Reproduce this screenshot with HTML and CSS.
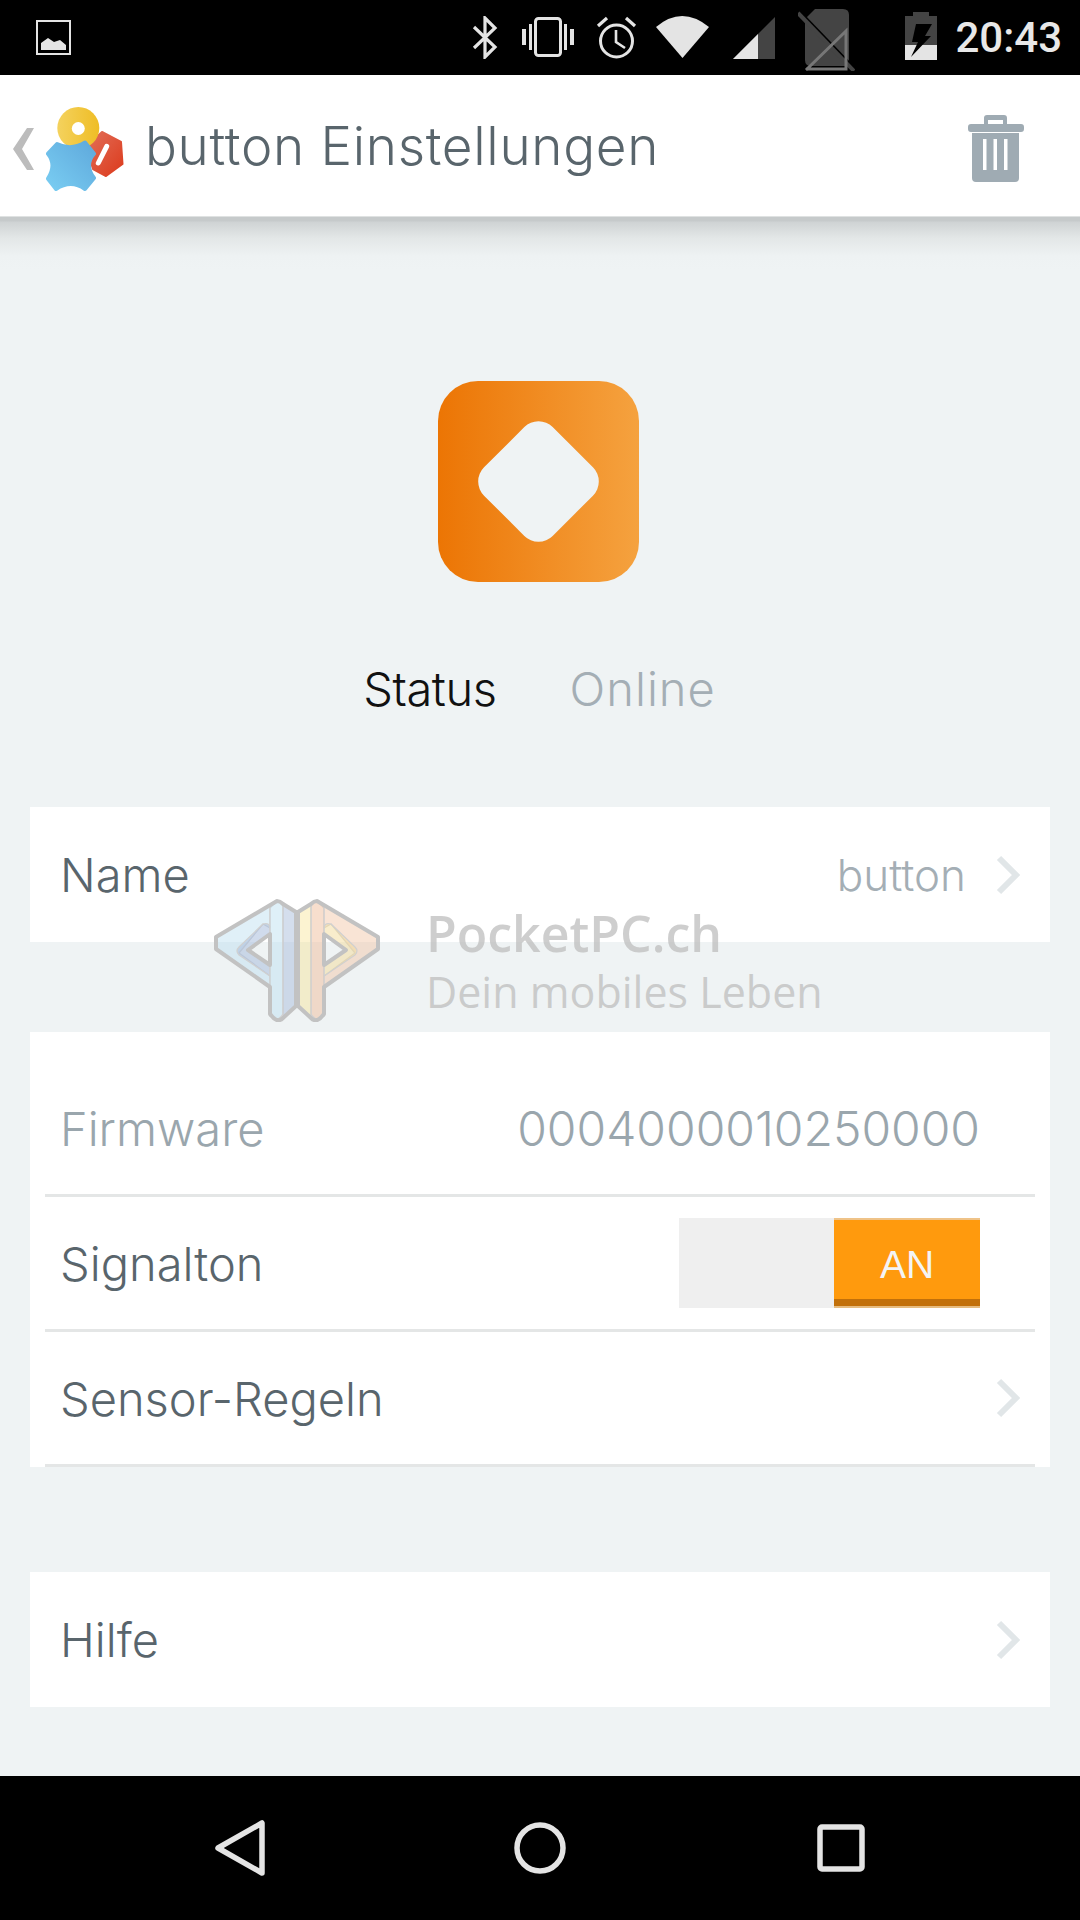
FILE: index.html
```html
<!DOCTYPE html>
<html>
<head>
    <meta charset="UTF-8">
    <title>button Einstellungen</title>
    <link rel="stylesheet" href="styles.css">
</head>
<body>
    <div class="phone">
        <div class="status-bar">
            <svg class="sb-image" viewBox="0 0 35 35">
                <rect x="1" y="1" width="33" height="33" fill="none" stroke="#e4e4e4" stroke-width="2"/>
                <path d="M5 30V23L12 18L18 22L24 20L30 25V30Z" fill="#e4e4e4"/>
            </svg>
            <div class="sb-right">
                <svg class="sb-bt" viewBox="0 0 26 43">
                    <path d="M2 11L23 31L13 41V2L23 12L2 32" fill="none" stroke="#e4e4e4" stroke-width="3.2"/>
                </svg>
                <svg class="sb-vib" viewBox="0 0 54 40">
                    <rect x="14.5" y="1.5" width="25" height="37" rx="3" fill="none" stroke="#e4e4e4" stroke-width="3"/>
                    <path d="M1 12H5V28H1ZM8 7H11V33H8ZM43 7H46V33H43ZM49 12H53V28H49Z" fill="#e4e4e4"/>
                </svg>
                <svg class="sb-alarm" viewBox="0 0 41 43">
                    <circle cx="20.5" cy="25" r="16" fill="none" stroke="#e4e4e4" stroke-width="3"/>
                    <path d="M20 14V26L29 32" fill="none" stroke="#e4e4e4" stroke-width="2.6"/>
                    <path d="M2 10L11 2M39 10L30 2" stroke="#e4e4e4" stroke-width="3.2"/>
                </svg>
                <svg class="sb-wifi" viewBox="0 0 53 42">
                    <path d="M0 11Q26 -11 53 11L26.5 42Z" fill="#e4e4e4"/>
                </svg>
                <svg class="sb-signal" viewBox="0 0 42 42">
                    <path d="M42 0V42H0Z" fill="#444"/>
                    <path d="M25 17V42H0Z" fill="#e4e4e4"/>
                </svg>
                <svg class="sb-sim" viewBox="0 0 57 62">
                    <path d="M17 0H45Q51 0 51 6V57H13Q7 57 7 51V10Z" fill="#444"/>
                    <path d="M0 1L56 59" stroke="#000" stroke-width="3"/>
                    <path d="M0 4L56 62" stroke="#444" stroke-width="4"/>
                    <path d="M8 61L48 22V60H8" fill="none" stroke="#777" stroke-width="3"/>
                </svg>
                <svg class="sb-battery" viewBox="0 0 32 48">
                    <path d="M8 0H24V4H32V33H0V4H8Z" fill="#444"/>
                    <rect y="33" width="32" height="15" fill="#e4e4e4"/>
                    <path d="M11 12H27L20 24H26L6 45L13 30H7Z" fill="#000"/>
                </svg>
                <span class="sb-time">20:43</span>
            </div>
        </div>

        <div class="app-header">
            <svg class="back-icon" viewBox="0 0 21 42">
                <path d="M21 0H14L0 21L14 42H21L9 21Z" fill="#bcbcbc"/>
            </svg>
            <svg class="app-logo" viewBox="0 0 78 85">
                <defs>
                    <linearGradient id="logoBlue" x1="0" y1="1" x2="1" y2="0">
                        <stop offset="0" stop-color="#79cdf2"/>
                        <stop offset="1" stop-color="#5fa9dc"/>
                    </linearGradient>
                    <linearGradient id="logoRed" x1="0" y1="0" x2="1" y2="1">
                        <stop offset="0" stop-color="#e2705a"/>
                        <stop offset="1" stop-color="#dc3a1c"/>
                    </linearGradient>
                    <linearGradient id="logoYellow" x1="0" y1="0" x2="1" y2="0">
                        <stop offset="0" stop-color="#f4d25e"/>
                        <stop offset="1" stop-color="#efbd25"/>
                    </linearGradient>
                </defs>
                <path d="M56 25L75 35L76.5 57L60 69L47 62L40 40Z" fill="url(#logoRed)" stroke="url(#logoRed)" stroke-width="2" stroke-linejoin="round"/>
                <circle cx="32.3" cy="21" r="21" fill="url(#logoYellow)"/>
                <circle cx="32.3" cy="21.5" r="6.5" fill="#fff"/>
                <path d="M11 37Q25 44 39 35.5L48 46.7Q38 58 48 71L39 82Q25 72 10 82L2 71.7Q11 58 2 46.7Z" fill="url(#logoBlue)" stroke="url(#logoBlue)" stroke-width="4" stroke-linejoin="round"/>
                <path d="M60.7 39.3L52.3 56" stroke="#fff" stroke-width="5" stroke-linecap="round"/>
            </svg>
            <h1 class="app-title">button Einstellungen</h1>
            <svg class="trash-icon" viewBox="0 0 56 67">
                <path d="M16 9V3Q16 0 19 0H36Q39 0 39 3V9H53Q56 9 56 12V14Q56 17 53 17H3Q0 17 0 14V12Q0 9 3 9ZM20 9H35V5H20Z" fill="#9fabb3" fill-rule="evenodd"/>
                <path d="M4 18H51V63Q51 67 47 67H8Q4 67 4 63ZM15 24V55H18.5V24ZM25.5 24V55H29V24ZM36 24V55H39.5V24Z" fill="#9fabb3" fill-rule="evenodd"/>
            </svg>
        </div>

        <main class="content">
            <div class="device-icon">
                <div class="device-diamond"></div>
            </div>

            <div class="status-line">
                <span class="status-label">Status</span>
                <span class="status-value">Online</span>
            </div>

            <section class="card card-name">
                <div class="row">
                    <span class="row-label">Name</span>
                    <span class="row-value">button</span>
                    <svg class="chevron" viewBox="0 0 24 40"><path d="M3 3L20 20L3 37" fill="none" stroke="#e1e6e8" stroke-width="6"/></svg>
                </div>
            </section>

            <section class="card card-info">
                <div class="row row-line row-first">
                    <span class="row-label muted">Firmware</span>
                    <span class="firmware">0004000010250000</span>
                </div>
                <div class="row row-line">
                    <span class="row-label">Signalton</span>
                    <div class="toggle">
                        <div class="toggle-on">AN</div>
                    </div>
                </div>
                <div class="row row-line">
                    <span class="row-label">Sensor-Regeln</span>
                    <svg class="chevron" viewBox="0 0 24 40"><path d="M3 3L20 20L3 37" fill="none" stroke="#e1e6e8" stroke-width="6"/></svg>
                </div>
            </section>

            <section class="card card-help">
                <div class="row">
                    <span class="row-label">Hilfe</span>
                    <svg class="chevron" viewBox="0 0 24 40"><path d="M3 3L20 20L3 37" fill="none" stroke="#e1e6e8" stroke-width="6"/></svg>
                </div>
            </section>
        </main>

        <div class="nav-bar">
            <svg class="nav-back" viewBox="0 0 50 56">
                <path d="M47 3V53L3 28Z" fill="none" stroke="#e4e4e4" stroke-width="5.5" stroke-linejoin="round"/>
            </svg>
            <svg class="nav-home" viewBox="0 0 52 52">
                <circle cx="26" cy="26" r="23" fill="none" stroke="#e4e4e4" stroke-width="5.5"/>
            </svg>
            <svg class="nav-recent" viewBox="0 0 48 48">
                <rect x="3" y="3" width="42" height="42" rx="2" fill="none" stroke="#e4e4e4" stroke-width="5.5"/>
            </svg>
        </div>

        <div class="watermark">
            <svg class="wm-logo" viewBox="0 0 168 124">
                <g stroke="#d0d0d0" stroke-width="1.2" stroke-linejoin="round">
                    <!-- left half -->
                    <path d="M64 3L3 39V51L57 89V78L26 55L50 26L57 30V10Z" fill="#b4dcee" fill-opacity=".42"/>
                    <path d="M50 26Q57 24 57 31V36L35 52L57 67V78L26 57Q22 53 26 49Z" fill="#aabedc" fill-opacity=".55"/>
                    <path d="M57 10Q58 3 64 3Q70 3 70 10V116Q64 126 57 116Z" fill="#c0e2f2" fill-opacity=".5"/>
                    <path d="M70 6L83 14V108L70 120Z" fill="#aabedc" fill-opacity=".5"/>
                    <!-- right half -->
                    <path d="M104 3L165 39V51L111 89V78L142 55L118 26L111 30V10Z" fill="#f0be9c" fill-opacity=".42"/>
                    <path d="M118 26Q111 24 111 31V36L133 52L111 67V78L142 57Q146 53 142 49Z" fill="#f4dc9a" fill-opacity=".5"/>
                    <path d="M111 10Q110 3 104 3Q98 3 98 10V116Q104 126 111 116Z" fill="#f0be9c" fill-opacity=".5"/>
                    <path d="M98 6L85 14V108L98 120Z" fill="#f8e18c" fill-opacity=".4"/>
                </g>
                <g fill="none" stroke="#c2c2c2" stroke-width="4" stroke-linejoin="round">
                    <path d="M64 3L3 39V51L57 89V116Q64 126 70 120L83 108V14L70 6Q67 3 64 3Z"/>
                    <path d="M35 52L57 36V67Z"/>
                    <path d="M104 3L165 39V51L111 89V116Q104 126 98 120L85 108V14L98 6Q101 3 104 3Z"/>
                    <path d="M133 52L111 36V67Z"/>
                </g>
            </svg>
            <div class="wm-text">
                <div class="wm-name">PocketPC.ch</div>
                <div class="wm-tag">Dein mobiles Leben</div>
            </div>
        </div>
    </div>
</body>
</html>
```

FILE: styles.css
```css
* {
    margin: 0;
    padding: 0;
    box-sizing: border-box;
}

body {
    font-family: Inter, Lato, sans-serif;
    background: #eff3f4;
}

.phone {
    position: relative;
    width: 1080px;
    height: 1920px;
    display: flex;
    flex-direction: column;
    overflow: hidden;
}

/* status bar */
.status-bar {
    height: 75px;
    background: #000;
    display: flex;
    align-items: flex-start;
    justify-content: space-between;
    padding: 20px 18px 0 36px;
    flex-shrink: 0;
}

.sb-image {
    width: 35px;
    height: 35px;
}

.sb-right {
    display: flex;
    align-items: flex-start;
    margin-top: -20px;
}

.sb-bt { width: 26px; height: 43px; margin-top: 16px; }
.sb-vib { width: 54px; height: 40px; margin: 17px 0 0 23px; }
.sb-alarm { width: 41px; height: 43px; margin: 16px 0 0 21px; }
.sb-wifi { width: 53px; height: 42px; margin: 16px 0 0 19px; }
.sb-signal { width: 42px; height: 42px; margin: 17px 0 0 24px; }
.sb-sim { width: 57px; height: 62px; margin: 9px 0 0 23px; }
.sb-battery { width: 32px; height: 48px; margin: 12px 0 0 50px; }

.sb-time {
    font-family: Roboto, sans-serif;
    font-size: 42px;
    font-weight: 500;
    line-height: 48px;
    color: #e8e8e8;
    margin: 14px 0 0 18px;
}

/* header */
.app-header {
    height: 141px;
    background: #fff;
    display: flex;
    align-items: center;
    padding: 0 56px 0 13px;
    flex-shrink: 0;
    position: relative;
}

.back-icon {
    width: 21px;
    height: 42px;
    margin-top: 6px;
}

.app-logo {
    width: 78px;
    height: 85px;
    margin: 8px 0 0 12px;
}

.app-title {
    font-size: 53px;
    font-weight: 300;
    letter-spacing: 0.7px;
    color: #59656c;
    margin-left: 21px;
    flex: 1;
}

.trash-icon {
    width: 56px;
    height: 67px;
    margin-top: 6px;
}

/* main */
.content {
    flex: 1;
    display: flex;
    flex-direction: column;
    padding: 165px 30px 0;
    background: linear-gradient(#dfe2e2 1px, #c6cacb 1px, #c6cacb 5px, #cfd3d4 6px, #e3e7e7 22px, #eef2f3 40px, #eff3f4 54px) no-repeat;
    background-color: #eff3f4;
}

.device-icon {
    width: 201px;
    height: 201px;
    border-radius: 40px;
    background: linear-gradient(90deg, #ec7504, #f5a23f);
    align-self: center;
    display: flex;
    align-items: center;
    justify-content: center;
    margin-left: -4px;
}

.device-diamond {
    width: 97px;
    height: 97px;
    border-radius: 20px;
    background: #eff3f4;
    transform: rotate(45deg);
}

.status-line {
    height: 106px;
    margin-top: 53px;
    display: flex;
    justify-content: center;
    align-items: center;
    gap: 73px;
    font-size: 47px;
    font-weight: 300;
    margin-left: -1px;
}

.status-label {
    color: #111;
    letter-spacing: -0.4px;
}

.status-value {
    color: #a4aeb5;
    letter-spacing: 1px;
}

.card {
    background: #fff;
}

.card-name {
    margin-top: 66px;
}

.card-info {
    margin-top: 90px;
    padding: 30px 15px 0;
}

.card-help {
    margin-top: 105px;
}

.row {
    height: 135px;
    display: flex;
    align-items: center;
    padding: 0 30px 0 30px;
}

.row-line {
    padding: 0 15px 0 15px;
    border-bottom: 3px solid #e4e6e6;
}

.row-first {
    justify-content: space-between;
}

.row-label {
    flex: 1;
    font-size: 47px;
    font-weight: 300;
    color: #59656c;
}

.row-label.muted {
    color: #9aa6ad;
}

.row-value {
    font-size: 44px;
    font-weight: 300;
    color: #a4aeb5;
    margin-right: 30px;
}

.firmware {
    font-size: 48px;
    font-weight: 300;
    color: #9aa6ad;
    padding-right: 40px;
}

.chevron {
    width: 24px;
    height: 40px;
}

.toggle {
    width: 301px;
    height: 90px;
    background: #efefef;
    display: flex;
    justify-content: flex-end;
    margin-right: 40px;
}

.toggle-on {
    width: 146px;
    height: 90px;
    padding-top: 3px;
    background: #ff9a0d;
    border-top: 2px solid #efc388;
    border-bottom: 2px solid #e6bc80;
    box-shadow: inset 0 -7px 0 #c2700a;
    color: #f4f4f4;
    font-family: 'Liberation Sans', sans-serif;
    font-size: 39px;
    display: flex;
    align-items: center;
    justify-content: center;
}

/* bottom nav */
.nav-bar {
    height: 144px;
    background: #000;
    flex-shrink: 0;
    display: flex;
    align-items: center;
    padding-left: 215px;
}

.nav-back { width: 50px; height: 56px; }
.nav-home { width: 52px; height: 52px; margin-left: 249px; }
.nav-recent { width: 48px; height: 48px; margin-left: 251px; }

/* watermark over the page */
.watermark {
    position: absolute;
    left: 213px;
    top: 898px;
    display: flex;
    pointer-events: none;
}

.wm-logo {
    width: 168px;
    height: 124px;
}

.wm-text {
    margin-left: 45px;
    font-family: 'Open Sans', sans-serif;
    color: rgba(190, 190, 190, 0.75);
}

.wm-name {
    font-size: 50px;
    font-weight: 600;
    line-height: 60px;
    margin-top: 5px;
}

.wm-tag {
    font-size: 43px;
    line-height: 57px;
}
```
